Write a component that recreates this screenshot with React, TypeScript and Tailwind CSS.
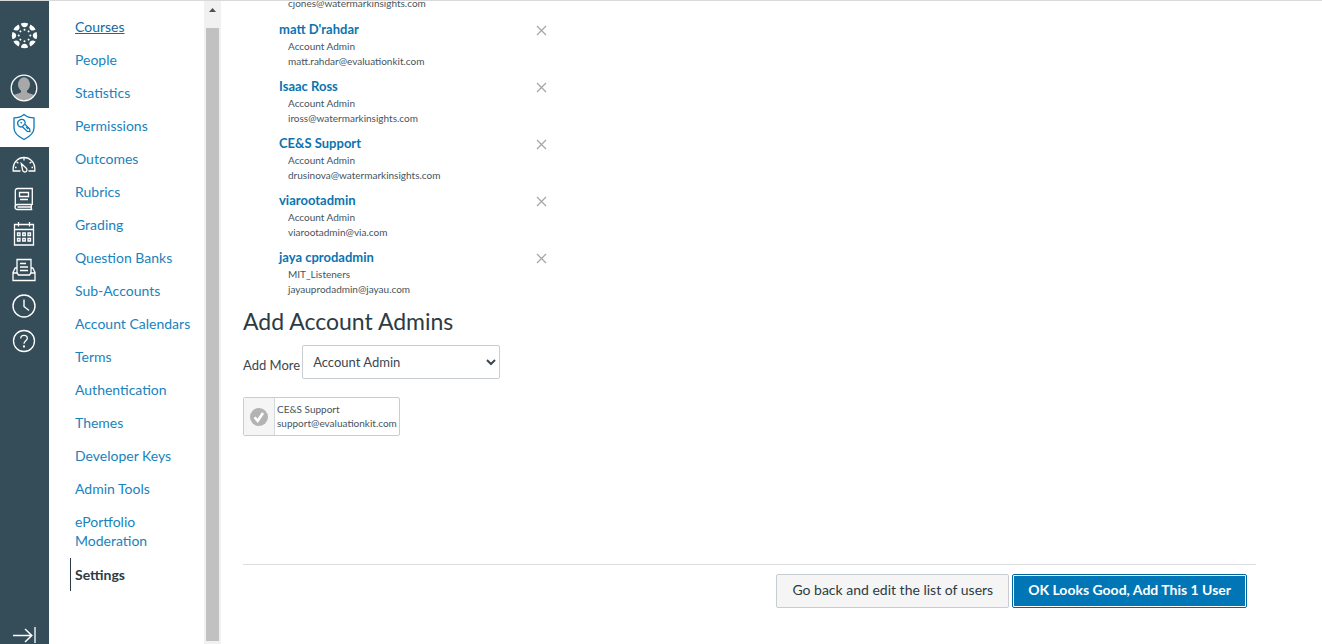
import React from 'react';

interface Admin {
  name: string;
  role: string;
  email: string;
}

const NAV_LINKS = [
  'Courses',
  'People',
  'Statistics',
  'Permissions',
  'Outcomes',
  'Rubrics',
  'Grading',
  'Question Banks',
  'Sub-Accounts',
  'Account Calendars',
  'Terms',
  'Authentication',
  'Themes',
  'Developer Keys',
  'Admin Tools',
  'ePortfolio Moderation',
];

const ADMINS: Admin[] = [
  { name: "matt D'rahdar", role: 'Account Admin', email: 'matt.rahdar@evaluationkit.com' },
  { name: 'Isaac Ross', role: 'Account Admin', email: 'iross@watermarkinsights.com' },
  { name: 'CE&S Support', role: 'Account Admin', email: 'drusinova@watermarkinsights.com' },
  { name: 'viarootadmin', role: 'Account Admin', email: 'viarootadmin@via.com' },
  { name: 'jaya cprodadmin', role: 'MIT_Listeners', email: 'jayauprodadmin@jayau.com' },
];

const ANGLES = [0, 45, 90, 135, 180, 225, 270, 315];

const LogoIcon = () => (
  <svg width="27" height="27" viewBox="0 0 27 27" fill="white">
    {ANGLES.map(angle => (
      <g key={angle} transform={`rotate(${angle} 13.5 13.5)`}>
        <path d="M9.900 1.400a12.600 12.600 0 0 1 7.200 0c-.3 2.300-1.700 3.800-3.600 3.800s-3.300-1.500-3.600-3.800z" />
        <circle cx="13.500" cy="7.700" r="1" />
      </g>
    ))}
  </svg>
);

const AvatarIcon = () => (
  <svg width="28" height="28" viewBox="0 0 28 28">
    <defs>
      <clipPath id="avatar-clip">
        <circle cx="14" cy="14" r="12.500" />
      </clipPath>
    </defs>
    <g clipPath="url(#avatar-clip)" fill="#a8a8a8">
      <ellipse cx="14" cy="10.500" rx="6" ry="7.200" />
      <path d="M11 15h6v3c1 2 8 1.500 9 5v5H2v-5c1-3.500 8-3 9-5z" />
    </g>
    <circle cx="14" cy="14" r="12.800" fill="none" stroke="white" strokeWidth="1.300" />
  </svg>
);

const ShieldIcon = () => (
  <svg width="24" height="28" viewBox="0 0 24 28" fill="none" stroke="#0a7ab8" strokeWidth="1.300">
    <path d="M12 1.500C9 4 5.500 4.900 2 4.900V15c0 5 4 8.500 10 11.500 6-3 10-6.500 10-11.500V4.900c-3.500 0-7-.9-10-3.400z" />
    <path d="M7.300 7.300c1.700-1.500 4.300-1.100 5.400.7.600 1.100.6 2.200.2 3.200l4.800 4.800.2 2.600-2.600-.2-4.900-4.700c-1.400.6-3 .2-4-1.100-1.100-1.700-.8-4 .9-5.300z" />
    <path d="M8.600 9.100l1.200 1.200M12.600 11.300l-2.200 2.300M14.200 14l2 2" />
  </svg>
);

const DashboardIcon = () => (
  <svg width="24" height="24" viewBox="0 0 24 24" fill="none" stroke="white" strokeWidth="1.300">
    <path d="M8.500 19H1.200v-2.700a10.800 10.800 0 0 1 21.600 0V19h-6.300" />
    <path d="M12 5.500v3M4.400 9.800l2 1.500M19.600 9.800l-2 1.500M3 15.500h1.500M19.500 15.500H21" />
    <path d="M9.300 11.500l5 4.700a2.200 2.200 0 1 1-3.700 2z" />
  </svg>
);

const BookIcon = () => (
  <svg width="24" height="24" viewBox="0 0 24 24" fill="none" stroke="white" strokeWidth="1.300">
    <path d="M20.300 17.500H5.500a2.500 2.500 0 0 0 0 5h14.800M20.300 18V1.500H5.500A2.300 2.300 0 0 0 3.300 4v16M19.300 17.500v5M5.500 20h13.800" />
    <path d="M7.500 5.500h9v4h-9zM8 12.500h8" />
  </svg>
);

const CalendarIcon = () => (
  <svg width="24" height="26" viewBox="0 0 24 26" fill="none" stroke="white" strokeWidth="1.300">
    <path d="M2.500 3.500h19v20.500h-19zM2.500 8.500h19M6.500 1v4.500M17.500 1v4.500" />
    <path d="M5.500 12h2.500v2.500H5.500zM10.750 12h2.500v2.500h-2.500zM16 12h2.500v2.500H16zM5.500 17.500h2.500v2.500H5.500zM10.750 17.500h2.500v2.500h-2.500zM16 17.500h2.500v2.500H16z" />
  </svg>
);

const InboxIcon = () => (
  <svg width="24" height="24" viewBox="0 0 24 24" fill="none" stroke="white" strokeWidth="1.300">
    <path d="M5 15V1.500h14V15M8 5.500h6M8 9h8M8 12.500h8" />
    <path d="M5 10H3.200L1 14.500v8h22v-8L20.800 10H19M1 15h4l1.500 2h11l1.500-2H23" />
  </svg>
);

const ClockIcon = () => (
  <svg width="26" height="26" viewBox="0 0 26 26" fill="none" stroke="white" strokeWidth="1.400">
    <circle cx="13" cy="13" r="11" />
    <path d="M13 6.500v7l5 4" />
  </svg>
);

const HelpIcon = () => (
  <svg width="24" height="24" viewBox="0 0 24 24" fill="none" stroke="white" strokeWidth="1.300">
    <circle cx="12" cy="12" r="10.500" />
    <path d="M8.700 9.500c0-2 1.400-3.200 3.300-3.200s3.300 1.200 3.300 2.900c0 2.600-3.300 2.600-3.300 5.600" />
    <circle cx="12" cy="17.500" r="0.500" fill="white" />
  </svg>
);

const ExpandIcon = () => (
  <svg width="24" height="18" viewBox="0 0 24 18" fill="none" stroke="white" strokeWidth="1.500">
    <path d="M1 9.500h19M13 3l6.800 6.500L13 16" />
    <path d="M23 1v16" strokeWidth="1.300" />
  </svg>
);

const CloseIcon = () => (
  <svg width="11" height="11" viewBox="0 0 11 11" fill="none" stroke="#a3a8ab" strokeWidth="1.300">
    <path d="M1 1l9 9M10 1L1 10" />
  </svg>
);

const CheckIcon = () => (
  <svg width="18" height="18" viewBox="0 0 18 18">
    <circle cx="9" cy="9" r="9" fill="#b3b3b3" />
    <path d="M4.500 9.300l3.200 3.500L13 5" fill="none" stroke="white" strokeWidth="2.600" />
  </svg>
);

const RailButton = ({ label, className, children }: { label: string; className: string; children: React.ReactNode }) => (
  <button type="button" aria-label={label} className={`flex w-full shrink-0 items-center justify-center pr-px ${className}`}>
    {children}
  </button>
);

const GlobalNav = () => (
  <nav aria-label="Global" className="flex w-[49px] shrink-0 flex-col bg-[#344d59]">
    <RailButton label="Home" className="h-[68px]"><LogoIcon /></RailButton>
    <RailButton label="Account" className="h-[39px] pb-0.5"><AvatarIcon /></RailButton>
    <RailButton label="Admin" className="h-[39px] bg-white pb-0.5"><ShieldIcon /></RailButton>
    <RailButton label="Dashboard" className="h-[35px] pb-0.5"><DashboardIcon /></RailButton>
    <RailButton label="Courses" className="h-[35px] pb-0.5"><BookIcon /></RailButton>
    <RailButton label="Calendar" className="h-[35px] pb-0.5"><CalendarIcon /></RailButton>
    <RailButton label="Inbox" className="h-9"><InboxIcon /></RailButton>
    <RailButton label="History" className="h-9"><ClockIcon /></RailButton>
    <RailButton label="Help" className="h-[35px] pb-0.5"><HelpIcon /></RailButton>
    <div className="grow" />
    <RailButton label="Expand navigation" className="h-[18px]"><ExpandIcon /></RailButton>
  </nav>
);

const AccountNav = () => (
  <nav aria-label="Account" className="w-[155px] shrink-0 pt-[9px] pl-[21px] text-sm leading-[19px]">
    <ul>
      {NAV_LINKS.map((label, i) => (
        <li key={label}>
          <a href="#" className={`block py-[7px] pr-2 pl-[5px] ${i === 0 ? 'text-[#0b6ba3] underline' : 'text-[#1883bd]'}`}>
            {label}
          </a>
        </li>
      ))}
      <li className="mt-px">
        <a href="#" aria-current="page" className="block border-l border-[#2d3b45] py-[7px] pl-1 font-bold text-[#2d3b45]">
          Settings
        </a>
      </li>
    </ul>
  </nav>
);

// Scroll track of the account menu
const ScrollTrack = () => (
  <div className="flex w-[17px] shrink-0 flex-col items-center bg-[#f1f1f1] pb-[3px]">
    <div className="flex h-[27px] shrink-0 justify-center pt-[7px]">
      <svg width="7" height="4" viewBox="0 0 7 4" fill="#505050">
        <path d="M3.500 0L7 4H0z" />
      </svg>
    </div>
    <div className="w-[13px] grow bg-[#c1c1c1]" />
  </div>
);

const AdminRow = ({ admin }: { admin: Admin }) => (
  <li className="mb-[7px] flex w-[268px] items-start justify-between">
    <div>
      <a href="#" className="block text-[13px] leading-5 font-bold text-[#0b74b0]">{admin.name}</a>
      <div className="pl-[9px] text-[10px] leading-[15px] text-[#47535c]">
        <p>{admin.role}</p>
        <p>{admin.email}</p>
      </div>
    </div>
    <button type="button" aria-label={`Remove ${admin.name}`} className="mt-1.5">
      <CloseIcon />
    </button>
  </li>
);

export default function App() {
  return (
    <div className="flex h-screen overflow-hidden border-t border-[#d9d9d9] bg-white font-['Lato','Liberation_Sans',sans-serif] text-[#2d3b45]">
      <GlobalNav />
      <AccountNav />
      <ScrollTrack />

      <main className="min-w-0 grow overflow-hidden pr-[66px] pl-[22px]">
        <ul className="-mt-[5px] pl-9">
          <li className="mb-2 pl-[9px] text-[10px] leading-[15px] text-[#47535c]">cjones@watermarkinsights.com</li>
          {ADMINS.map(admin => (
            <AdminRow key={admin.email} admin={admin} />
          ))}
        </ul>

        <h2 className="text-[23px] leading-[34px]">Add Account Admins</h2>

        {/* Role */}
        <div className="mt-[7px] flex items-center gap-0.5 text-[13px] text-[#3a4750]">
          <label htmlFor="admin_role" className="pt-2">Add More</label>
          <select id="admin_role" className="h-[34px] w-[198px] rounded-xs border border-[#c7cdd1] bg-white px-1.5">
            <option>Account Admin</option>
          </select>
        </div>

        {/* Users to add */}
        <div className="mt-[18px] flex h-[39px] w-fit rounded-xs border border-[#c7cdd1]">
          <div className="flex w-[31px] items-center justify-center border-r border-[#d5d9dc] bg-[#f5f5f5]">
            <CheckIcon />
          </div>
          <div className="px-0.5 pt-1 text-[10px] leading-[14px] text-[#47535c]">
            <p>CE&amp;S Support</p>
            <p>support@evaluationkit.com</p>
          </div>
        </div>

        {/* Actions */}
        <div className="mt-32 flex justify-end gap-[3px] border-t border-[#dddddd] pt-[9px] pr-[9px] text-sm">
          <button type="button" className="h-[34px] rounded-xs border border-[#c7cdd1] bg-[#f5f5f5] px-[15px] pb-0.5">
            Go back and edit the list of users
          </button>
          <button type="button" className="h-[34px] rounded-xs border border-[#00669e] bg-white p-px font-bold text-white">
            <span className="flex h-full items-center bg-[#0076b6] px-3.5 pb-0.5">OK Looks Good, Add This 1 User</span>
          </button>
        </div>
      </main>
    </div>
  );
}
